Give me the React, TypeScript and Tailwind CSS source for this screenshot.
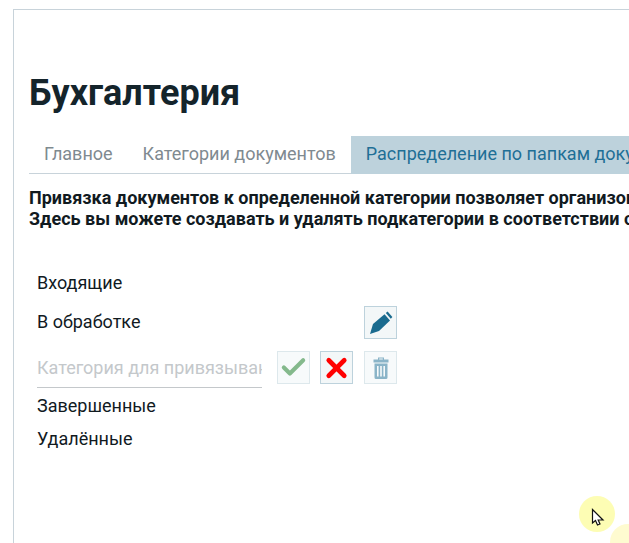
import { Check, X } from "lucide-react";

function PencilIcon() {
  return (
    <svg width="24" height="24" viewBox="0 0 24 24" fill="#1a6b8f">
      <path d="M1 23 L4 13 L15.5 3.2 L21 9.5 L10 20 Z" />
      <path d="M16.8 2 L18.6 0.6 L23.4 6 L21.8 7.8 Z" />
    </svg>
  );
}

function TrashIcon() {
  return (
    <svg width="16" height="24" viewBox="0 0 16 24" fill="#8ab4c8">
      <path d="M5 1.5 H11 V3.5 H15.5 V6.5 H0.5 V3.5 H5 Z M6.2 2.6 V3.5 H9.8 V2.6 Z" fillRule="evenodd" />
      <path
        d="M1.5 7.5 H14.5 V21.5 Q14.5 23 13 23 H3 Q1.5 23 1.5 21.5 Z M4 10 V20.5 H5.6 V10 Z M7.2 10 V20.5 H8.8 V10 Z M10.4 10 V20.5 H12 V10 Z"
        fillRule="evenodd"
      />
    </svg>
  );
}

export default function App() {
  return (
    <div className="relative h-[543px] w-[629px] overflow-hidden bg-white font-['Roboto',sans-serif]">
      <div className="ml-[13px] mt-[9px] h-[534px] border-l border-t border-[#c8d3da] pl-[15px]">
        <h1 className="mt-[61px] text-[36px] font-bold leading-[44px] text-[#14242b]">Бухгалтерия</h1>

        <div className="mt-[21px] flex h-[38px] w-[620px] border-b border-[#c8d3da] text-[18px] whitespace-nowrap">
          <div className="flex items-center px-[15px] pb-[3px] text-[#7f8a90]">Главное</div>
          <div className="flex items-center px-[15px] pb-[3px] text-[#7f8a90]">Категории документов</div>
          <div className="-mb-px flex grow items-center overflow-hidden bg-[#bdd2dc] px-[15px] pb-[3px] text-[#1f6f96]">
            Распределение по папкам документов
          </div>
        </div>

        <div className="mt-[13px] w-[600px] overflow-hidden text-[18px] font-bold leading-[21px] whitespace-nowrap text-[#111a1f]">
          <p>Привязка документов к определенной категории позволяет организовать хранение</p>
          <p>Здесь вы можете создавать и удалять подкатегории в соответствии с вашими задачами</p>
        </div>

        <div className="mt-[37px] pl-2 text-[18px] text-[#111a1f]">
          <div className="flex h-[40px] items-center pb-[7px]">Входящие</div>
          <div className="flex h-[33px] w-[360px] items-center justify-between">
            <span className="pb-[2px]">В обработке</span>
            <button
              type="button"
              className="flex h-[33px] w-[33px] items-center justify-center border border-[#bdd2dc] bg-[#f3f7f8]"
            >
              <PencilIcon />
            </button>
          </div>
          <div className="mt-[12px] flex items-start">
            <div className="h-[37px] w-[225px] overflow-hidden border-b border-[#c4c8cb] leading-[34px] whitespace-nowrap text-[#c4c8cb]">
              Категория для привязывания
            </div>
            <div className="ml-[15px] flex gap-[10px]">
              <button
                type="button"
                className="flex h-[33px] w-[33px] items-center justify-center border border-[#dde8ec] bg-[#f7fafb]"
              >
                <Check size={29} color="#84b98c" strokeWidth={3.4} />
              </button>
              <button
                type="button"
                className="flex h-[33px] w-[33px] items-center justify-center border border-[#bdd2dc] bg-[#f3f7f8]"
              >
                <X size={34} color="#ff0000" strokeWidth={3.6} />
              </button>
              <button
                type="button"
                className="ml-px flex h-[33px] w-[33px] items-center justify-center border border-[#dde8ec] bg-[#f7fafb]"
              >
                <TrashIcon />
              </button>
            </div>
          </div>
          <div className="flex h-[38px] items-center pb-[4px]">Завершенные</div>
          <div className="flex h-[26px] items-center pb-[2px]">Удалённые</div>
        </div>
      </div>

      {/* cursor highlight */}
      <div className="absolute left-[579px] top-[496px] h-9 w-9 rounded-full bg-[#fdfdb4]" />
      <div className="absolute left-[610px] top-[524px] h-9 w-9 rounded-full bg-[#fefbd0]" />
      <svg className="absolute left-[591px] top-[508px]" width="14" height="20" viewBox="0 0 14 20">
        <path d="M1.5 1.5 V15 L4.5 12.5 L6.5 17 L9 16 L7.2 12 H12 Z" fill="#fff" stroke="#111" strokeWidth="1.2" />
      </svg>
    </div>
  );
}
